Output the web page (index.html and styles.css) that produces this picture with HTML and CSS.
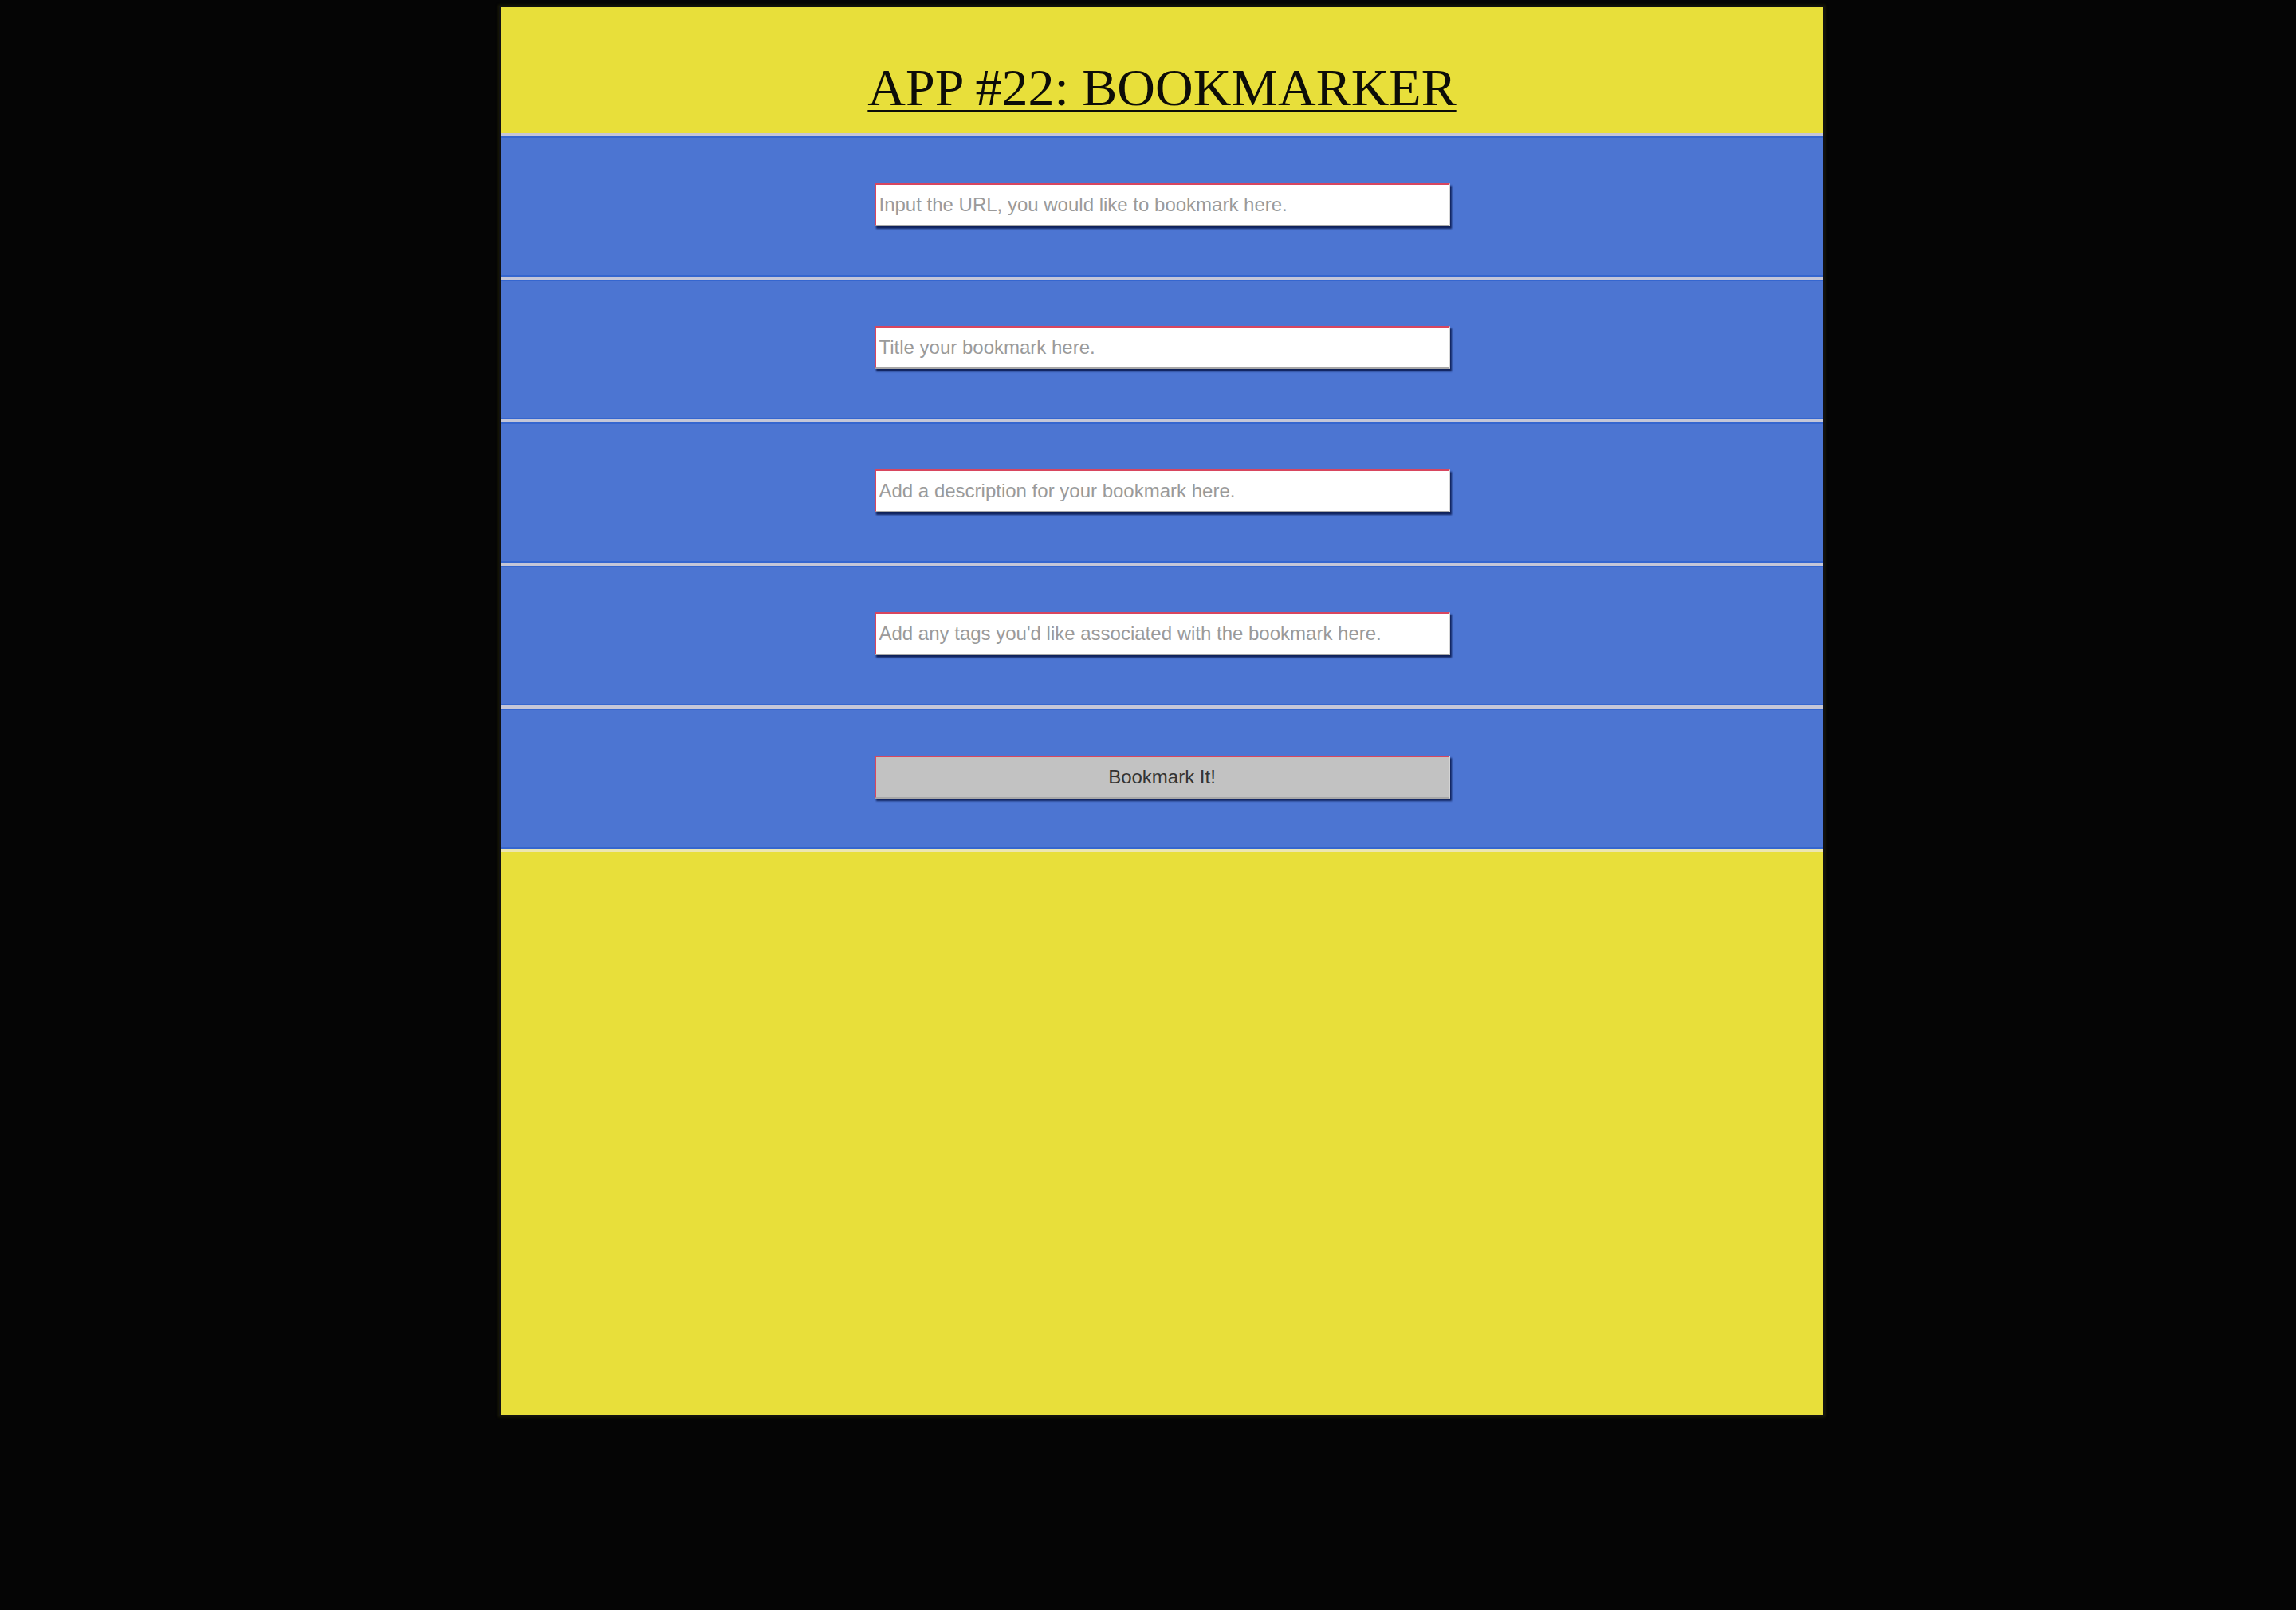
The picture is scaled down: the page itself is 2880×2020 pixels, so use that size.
FILE: index.html
```html
<!DOCTYPE html>
<html lang="en">
<head>
<meta charset="utf-8">
<title>App #22: Bookmarker</title>
<link rel="stylesheet" href="styles.css">
</head>
<body>
<main class="app">
  <header class="app-header">
    <h1 class="app-title">APP #22: BOOKMARKER</h1>
  </header>
  <form class="bm-form">
    <div class="bm-row"><input class="bm-input" type="text" placeholder="Input the URL, you would like to bookmark here."></div>
    <div class="bm-row"><input class="bm-input" type="text" placeholder="Title your bookmark here."></div>
    <div class="bm-row"><input class="bm-input" type="text" placeholder="Add a description for your bookmark here."></div>
    <div class="bm-row"><input class="bm-input" type="text" placeholder="Add any tags you'd like associated with the bookmark here."></div>
    <div class="bm-row bm-row-last"><button class="bm-button" type="button">Bookmark It!</button></div>
  </form>
  <section class="bm-list"></section>
</main>
</body>
</html>
```

FILE: styles.css
```css
html, body {
  margin: 0;
  background: #050505;
}
body {
  padding: 9px 0 0 35px;
  min-height: 2020px;
  box-sizing: border-box;
}
.app {
  width: 1659px;
  height: 1766px;
  margin: 0 auto;
  background: #e8df3a;
  display: flex;
  flex-direction: column;
  box-shadow: 0 0 0 2px #111, 0 0 3px 3px #1a1a05;
}
.app-header {
  height: 158px;
  box-sizing: border-box;
  padding-top: 64px;
  text-align: center;
}
.app-title {
  margin: 0;
  font-family: "Liberation Serif", "Times New Roman", serif;
  font-weight: normal;
  font-size: 66px;
  line-height: 73px;
  color: #0d0d08;
  text-decoration: underline;
  text-decoration-thickness: 3px;
  text-underline-offset: 6px;
}
.bm-form {
  display: flex;
  flex-direction: column;
  background: #4c75d2;
  border-top: 4px solid #c4c6d8;
}
.bm-row {
  height: 175.5px;
  display: flex;
  align-items: center;
  justify-content: center;
  border-bottom: 4px solid #c4c6d8;
  box-shadow: inset 0 -2px 0 #3566cf, inset 0 2px 0 #3566cf;
}
.bm-row-last {
  border-bottom-color: #ece6b0;
}
.bm-input,
.bm-button {
  width: 722px;
  height: 54px;
  box-sizing: border-box;
  border-width: 2px;
  border-style: solid;
  border-color: #d8465f #d4d4d4 #a8a8a8 #d8465f;
  box-shadow: 2px 3px 2px rgba(5, 20, 70, 0.85);
  font-family: "Liberation Sans", Arial, sans-serif;
  font-size: 24px;
  margin: 0 0 4px 0;
}
.bm-input {
  background: #ffffff;
  padding: 0 4px;
  color: #222;
}
.bm-input::placeholder {
  color: #9a9a9a;
}
.bm-button {
  background: #c2c2c2;
  color: #333;
  padding: 0;
}
.bm-list {
  flex: 1;
}
```
